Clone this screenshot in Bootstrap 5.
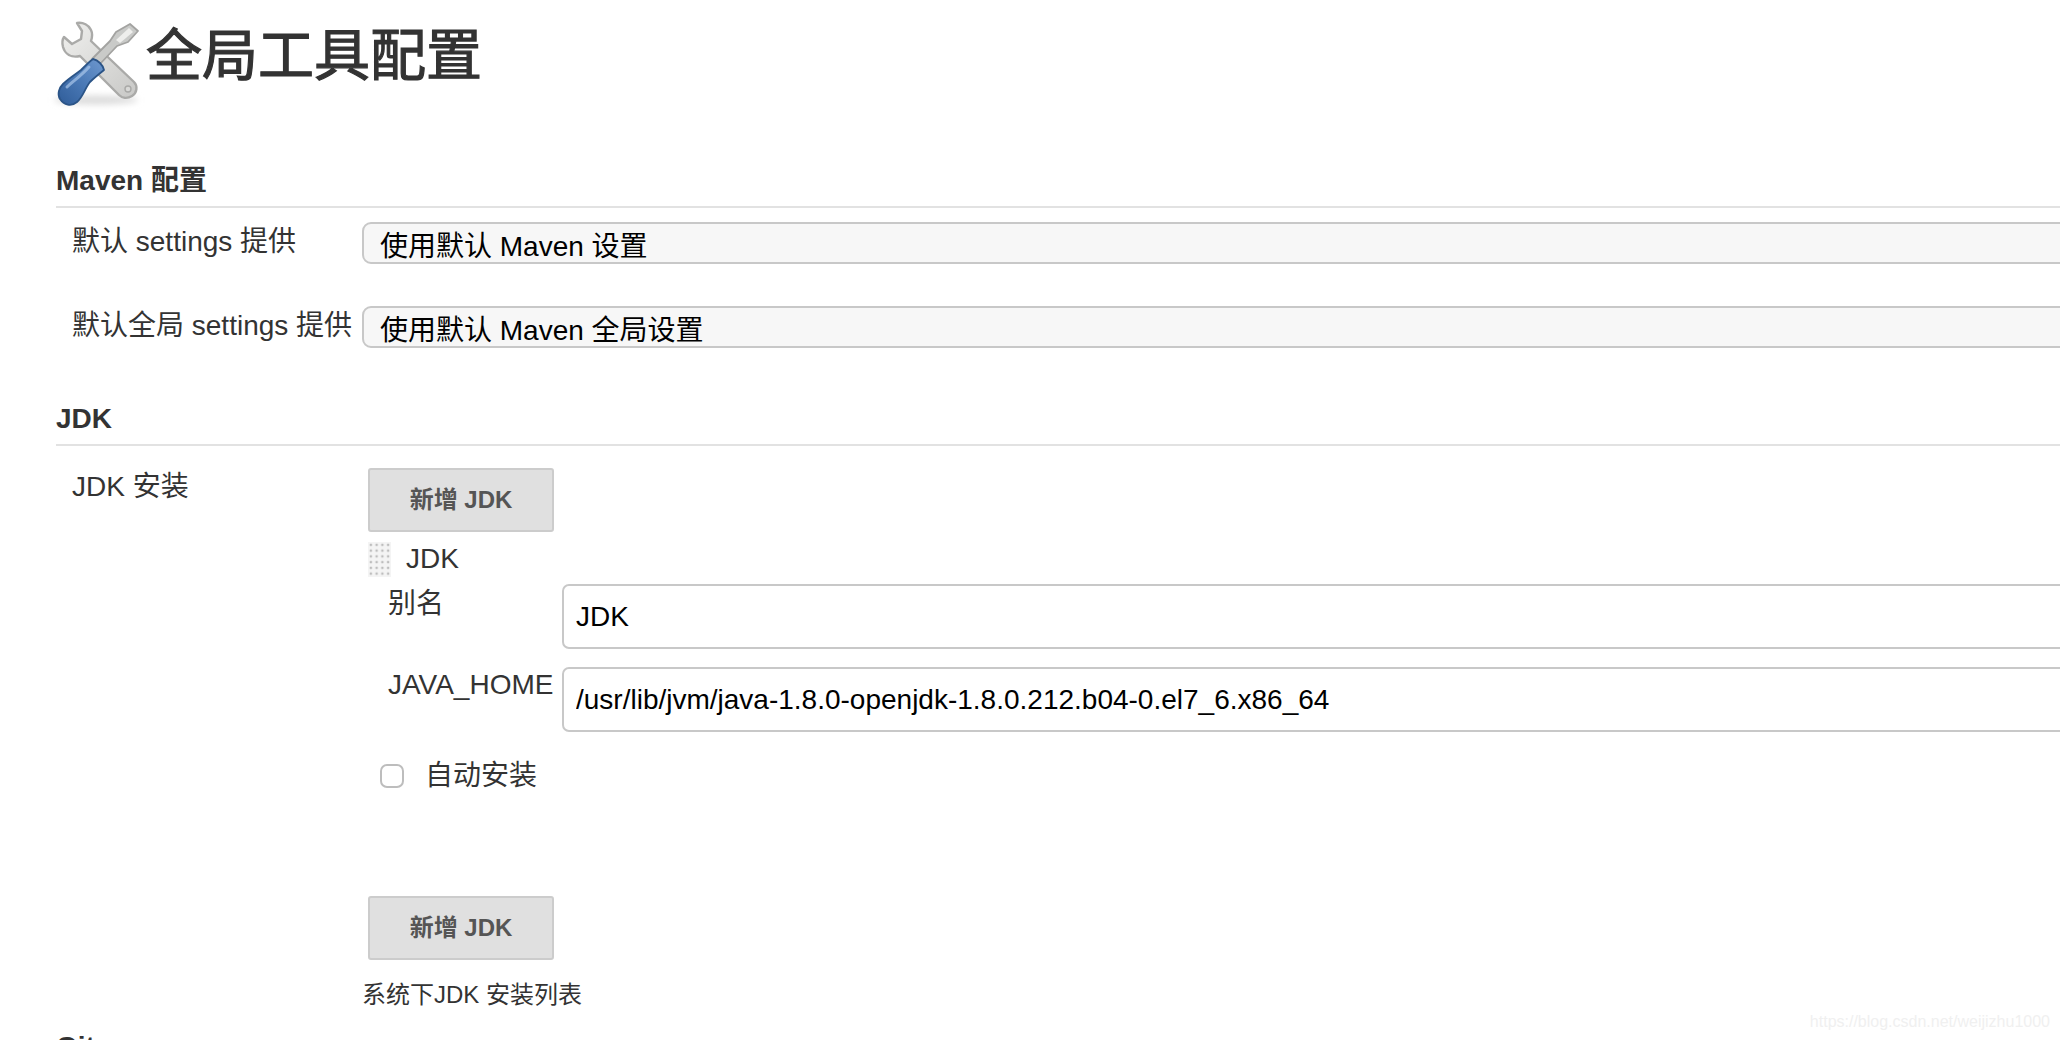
<!DOCTYPE html>
<html lang="zh-CN">
<head>
    <meta charset="UTF-8">
    <meta name="viewport" content="width=device-width, initial-scale=1.0">
    <title>全局工具配置</title>
    <link href="https://cdn.jsdelivr.net/npm/bootstrap@5.3.0/dist/css/bootstrap.min.css" rel="stylesheet">
    <style>
        html, body {
            height: 1040px;
            overflow: hidden;
        }
        body {
            background-color: #fff;
            color: #333;
            font-family: "Liberation Sans", "Noto Sans CJK SC", sans-serif;
            font-size: 28px;
            line-height: 34px;
        }
        .page-head {
            height: 164px;
            padding: 10px 0 0 40px;
        }
        .page-head svg {
            width: 106px;
            height: 100px;
            flex: none;
        }
        .page-head h1 {
            font-size: 56px;
            line-height: 92px;
            font-weight: 400;
            -webkit-text-stroke: 1.2px #333;
            margin: 0;
            color: #333;
        }
        .conf-wrap {
            padding-left: 56px;
        }
        .section-head {
            font-size: 28px;
            line-height: 34px;
            font-weight: 700;
            margin: 0;
            padding-bottom: 8px;
            border-bottom: 2px solid #e2e2e2;
        }
        .section-jdk {
            margin-top: 54px;
        }
        .section-git {
            margin-top: 18px;
        }
        .label-col {
            width: 306px;
            flex: none;
            padding-left: 16px;
        }
        .select-row {
            height: 42px;
            margin-top: 14px;
        }
        .select-row + .select-row {
            margin-top: 42px;
        }
        .select-row .label-col {
            padding-top: 4px;
            line-height: 32px;
        }
        .conf-select {
            flex: 1 1 auto;
            margin-right: -20px;
            height: 42px;
            padding: 6px 0 0 16px;
            font-size: 28px;
            line-height: 34px;
            color: #000;
            background-color: #f7f7f7;
            background-image: none;
            border: 2px solid #c8c8c8;
            border-radius: 9px 0 0 9px;
            box-shadow: none;
            font-family: inherit;
        }
        .jdk-row {
            margin-top: 22px;
        }
        .jdk-row > .label-col {
            line-height: 34px;
            padding-top: 2px;
        }
        .jdk-body {
            flex: 1 1 auto;
            min-width: 0;
        }
        .jdk-pad {
            padding-left: 6px;
        }
        .add-btn {
            display: block;
            width: 186px;
            height: 64px;
            padding: 0;
            font-size: 24px;
            font-weight: 700;
            color: #555;
            background-color: #e0e0e0;
            border: 2px solid #ccc;
            border-radius: 3px;
        }
        .add-btn:hover {
            color: #555;
            background-color: #e0e0e0;
            border-color: #ccc;
        }
        .add-btn-last {
            margin-top: 108px;
        }
        .drag-row {
            margin-top: 10px;
            height: 35px;
        }
        .drag-handle {
            width: 23px;
            height: 35px;
            flex: none;
            margin-right: 15px;
            background-color: #f4f4f4;
            background-image: radial-gradient(circle, #bdbdbd 1.2px, transparent 1.6px);
            background-size: 5.75px 5.75px;
        }
        .drag-name {
            margin-bottom: 2px;
        }
        .field-row {
            margin-top: 18px;
        }
        .field-first {
            margin-top: 7px;
        }
        .field-label {
            width: 194px;
            flex: none;
            padding-left: 20px;
            font-size: 28px;
            line-height: 34px;
        }
        .field-first .field-label {
            padding-top: 3px;
        }
        .field-row:not(.field-first) .field-label {
            padding-top: 1px;
        }
        .field-input {
            flex: 1 1 auto;
            margin-right: -20px;
            height: 65px;
            padding: 0 0 0 12px;
            font-size: 28px;
            color: #000;
            border: 2px solid #c8c8c8;
            border-radius: 7px 0 0 7px;
            font-family: inherit;
        }
        .auto-row {
            margin-top: 32px;
            padding-left: 12px;
            height: 24px;
        }
        .auto-check {
            width: 24px;
            height: 24px;
            margin: 0 21px 0 0;
            flex: none;
            border: 2px solid #bdbdbd;
            border-radius: 5px;
        }
        .auto-row label {
            font-size: 28px;
            line-height: 24px;
        }
        .help-text {
            margin: 18px 0 0 0;
            font-size: 24px;
            line-height: 34px;
        }
        .watermark {
            position: absolute;
            right: 10px;
            top: 1010px;
            font-size: 16px;
            line-height: 24px;
            color: #f0f0f0;
        }
    </style>
</head>
<body>
    <div class="page-head d-flex align-items-start">
        <svg viewBox="0 0 106 100" aria-hidden="true">
            <defs>
                <linearGradient id="steel" x1="0" y1="0" x2="1" y2="1">
                    <stop offset="0" stop-color="#f0f0ee"/>
                    <stop offset="1" stop-color="#c8c8c6"/>
                </linearGradient>
                <linearGradient id="blue" x1="1" y1="0" x2="0" y2="1">
                    <stop offset="0" stop-color="#6f99cf"/>
                    <stop offset="0.5" stop-color="#4a79b6"/>
                    <stop offset="1" stop-color="#2f5c98"/>
                </linearGradient>
                <filter id="soft" x="-20%" y="-100%" width="140%" height="300%">
                    <feGaussianBlur stdDeviation="3"/>
                </filter>
            </defs>
            <ellipse cx="56" cy="90" rx="42" ry="4.5" fill="#dcdcdc" filter="url(#soft)"/>
            <!-- wrench -->
            <path d="M37 13 C43 12 49 15 51 20 C53 24 52 28 51 31 L94 72 C98 76 97 83 92 86 C87 89 82 88 79 85 L40 46 C31 48 25 44 23 37 C22 33 22 30 24 27 L32 34 L41 29 L42 21 Z" fill="url(#steel)" stroke="#aaaaa8" stroke-width="2.4" stroke-linejoin="round"/>
            <circle cx="88" cy="79" r="3" fill="#d8d8d6" stroke="#a9a9a7" stroke-width="1.4"/>
            <!-- screwdriver shaft and blade -->
            <path d="M90 14 L98 21 L88 32 L77 36 L59 55 L52 49 L70 31 L76 22 Z" fill="#c9cac8" stroke="#a3a3a1" stroke-width="1.8" stroke-linejoin="round"/>
            <path d="M89 18 L93 22 L80 33 L76 30 Z" fill="#eeeeec"/>
            <!-- handle -->
            <path d="M53 49 C58 50 63 55 64 60 C59 64 54 68 50 72 C45 78 43 87 37 92 C31 97 24 95 20 89 C17 84 19 78 23 74 C29 68 36 64 41 60 C45 56 49 52 53 49 Z" fill="url(#blue)" stroke="#2b5487" stroke-width="1.8" stroke-linejoin="round"/>
            <path d="M27 77 C33 71 40 67 49 57" fill="none" stroke="#a9c6ea" stroke-width="3" stroke-linecap="round" opacity="0.7"/>
        </svg>
        <h1>全局工具配置</h1>
    </div>

    <div class="conf-wrap">
        <h2 class="section-head">Maven 配置</h2>
        <div class="select-row d-flex">
            <div class="label-col">默认 settings 提供</div>
            <select class="form-select conf-select"><option>使用默认 Maven 设置</option></select>
        </div>
        <div class="select-row d-flex">
            <div class="label-col">默认全局 settings 提供</div>
            <select class="form-select conf-select"><option>使用默认 Maven 全局设置</option></select>
        </div>

        <h2 class="section-head section-jdk">JDK</h2>
        <div class="jdk-row d-flex">
            <div class="label-col">JDK 安装</div>
            <div class="jdk-body">
                <div class="jdk-pad">
                    <button type="button" class="btn add-btn">新增 JDK</button>
                    <div class="drag-row d-flex align-items-center">
                        <span class="drag-handle"></span>
                        <span class="drag-name">JDK</span>
                    </div>
                    <div class="field-row field-first d-flex">
                        <div class="field-label">别名</div>
                        <input class="form-control field-input" type="text" value="JDK">
                    </div>
                    <div class="field-row d-flex">
                        <div class="field-label">JAVA_HOME</div>
                        <input class="form-control field-input" type="text" value="/usr/lib/jvm/java-1.8.0-openjdk-1.8.0.212.b04-0.el7_6.x86_64">
                    </div>
                    <div class="auto-row d-flex align-items-center">
                        <input class="form-check-input auto-check" type="checkbox" id="autoInstall">
                        <label for="autoInstall">自动安装</label>
                    </div>
                    <button type="button" class="btn add-btn add-btn-last">新增 JDK</button>
                </div>
                <div class="help-text">系统下JDK 安装列表</div>
            </div>
        </div>

        <h2 class="section-head section-git">Git</h2>
    </div>

    <div class="watermark">https://blog.csdn.net/weijizhu1000</div>

    <script src="https://cdn.jsdelivr.net/npm/bootstrap@5.3.0/dist/js/bootstrap.bundle.min.js"></script>
</body>
</html>
